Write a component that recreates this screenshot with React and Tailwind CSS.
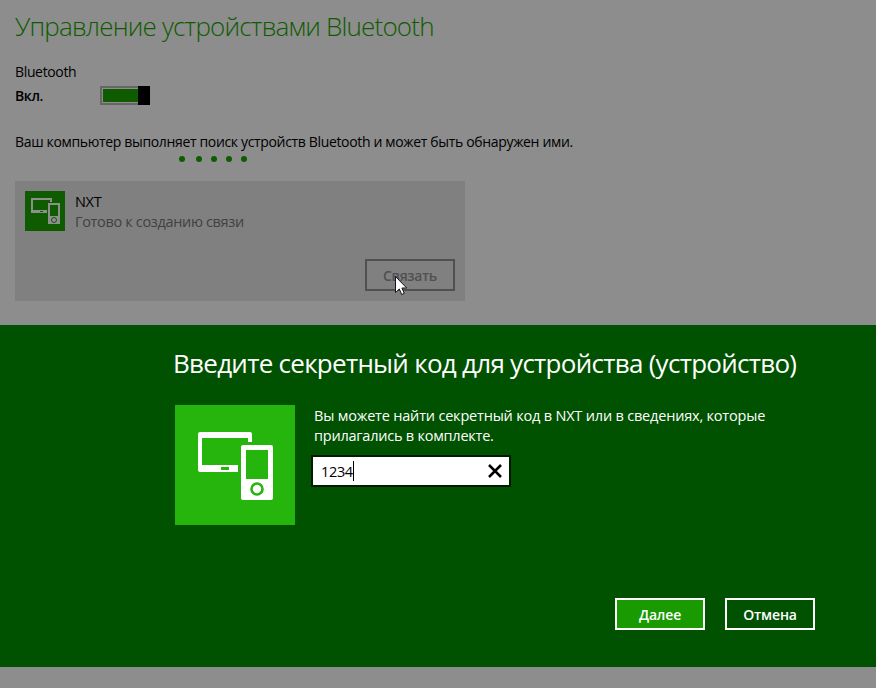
import React from "react";

function DevicesIcon({ className, color, back }) {
  return (
    <svg className={className} viewBox="0 0 120 120">
      <path
        fill={color}
        fillRule="evenodd"
        d="M25 27h50a2 2 0 0 1 2 2v8h-4v-4H27v27h36v7H25a2 2 0 0 1-2-2V29a2 2 0 0 1 2-2ZM46 62v3h8v-3Z"
      />
      <path
        fill={color}
        fillRule="evenodd"
        d="M68 40h28a2 2 0 0 1 2 2v51a2 2 0 0 1-2 2H68a2 2 0 0 1-2-2V42a2 2 0 0 1 2-2ZM71 45v29h22V45Z"
      />
      <circle cx="82" cy="84" r="5.5" fill="none" stroke={back} strokeWidth="2.6" />
    </svg>
  );
}

function SmallDevicesIcon() {
  return (
    <svg className="size-10 bg-[#0f5c00]" viewBox="0 0 40 40" fill="none">
      <path fill="#8e8e8e" fillRule="evenodd" d="M6 7h21v4h-2V9H8v10h14v3H6ZM15 20v1h3v-1Z" />
      <path fill="#8e8e8e" fillRule="evenodd" d="M23 12h12v21H23ZM25 14v11h8V14Z" />
      <circle cx="29" cy="29" r="2.5" stroke="#0f5c00" strokeWidth="1" />
    </svg>
  );
}

export default function App() {
  return (
    <div className="relative flex h-[688px] w-[876px] flex-col overflow-hidden bg-[#8d8d8d] font-['Open_Sans','Noto_Sans',sans-serif] text-[14px] leading-5 text-black">
      <main className="flex h-[325px] flex-col items-start pl-[15px] whitespace-nowrap">
        <h1 className="mt-[8px] text-[26px] leading-9 font-light tracking-[-0.81px] text-[#0f5c00]">
          Управление устройствами Bluetooth
        </h1>
        <div className="mt-[18px] tracking-[-0.35px]">Bluetooth</div>
        <div className="mt-[3px] flex h-5 items-center">
          <span className="w-[85px] pt-0.5 font-semibold tracking-[-0.4px]">Вкл.</span>
          <div className="flex h-[19px] w-[50px]">
            <div className="w-[38px] border-2 border-r-0 border-[#666] p-px pr-0">
              <div className="h-full bg-[#0f5c00]" />
            </div>
            <div className="w-3 bg-black" />
          </div>
        </div>
        <p className="mt-[27px] tracking-[-0.34px]">
          Ваш компьютер выполняет поиск устройств Bluetooth и может быть обнаружен ими.
        </p>
        <svg className="mt-1 ml-[163px] h-[6px] w-[70px]" viewBox="0 0 70 6" fill="#0f5c00">
          <circle cx="4" cy="3" r="3" />
          <circle cx="21" cy="3" r="3" />
          <circle cx="36" cy="3" r="3" />
          <circle cx="51" cy="3" r="3" />
          <circle cx="66" cy="3" r="3" />
        </svg>
        <section className="mt-[19px] flex h-[120px] w-[450px] flex-col justify-between bg-[#808080] p-[10px]">
          <div className="flex gap-[10px]">
            <SmallDevicesIcon />
            <div className="pt-px text-[14.5px]">
              <div className="tracking-[-0.3px]">NXT</div>
              <div className="tracking-[-0.34px] text-[#414141]">Готово к созданию связи</div>
            </div>
          </div>
          <button className="h-8 w-[90px] self-end border-2 border-[#505050] pt-px text-[14px] leading-7 font-semibold tracking-[-0.35px] text-[#505050]">
            Связать
          </button>
        </section>
      </main>

      <section className="flex h-[342px] flex-col bg-[#005100] text-white whitespace-nowrap">
        <h2 className="mt-[20px] ml-[173px] text-[26px] leading-9 tracking-[-0.73px]">
          Введите секретный код для устройства (устройство)
        </h2>
        <div className="mt-6 ml-[175px] flex">
          <DevicesIcon className="size-[120px] bg-[#26b50d]" color="#fff" back="#26b50d" />
          <div className="ml-4 pt-px">
            <p className="ml-[3px] text-[14.5px] tracking-[-0.19px]">
              Вы можете найти секретный код в NXT или в сведениях, которые
            </p>
            <p className="ml-[3px] text-[14.5px] tracking-[-0.23px]">прилагались в комплекте.</p>
            <div className="mt-[9px] flex h-8 w-[200px] items-center border-2 border-[#001b00] bg-white pl-2 text-black">
              <span className="pt-px text-[14.5px] tracking-[-0.35px]">1234</span>
              <span className="h-5 w-px bg-black" />
              <svg className="mr-[7px] ml-auto size-[14px]" viewBox="0 0 14 14" stroke="#000" strokeWidth="2.5">
                <path d="M1 1l12 12M13 1L1 13" />
              </svg>
            </div>
          </div>
        </div>
        <div className="mt-[73px] ml-[615px] flex gap-5 font-semibold tracking-[-0.15px]">
          <button className="h-8 w-[90px] border-2 border-white bg-[#189a00] pt-px leading-7">Далее</button>
          <button className="h-8 w-[90px] border-2 border-white pt-px leading-7">Отмена</button>
        </div>
      </section>

      <svg className="absolute top-[275px] left-[394px] h-[21px] w-[14px]" viewBox="0 0 14 21">
        <path
          d="M1.5 1.5v16l3.8-3.5 2.4 5.5 2.6-1.1-2.4-5.4h4.8Z"
          fill="#fff"
          stroke="#14141e"
          strokeWidth="1"
        />
      </svg>
    </div>
  );
}
